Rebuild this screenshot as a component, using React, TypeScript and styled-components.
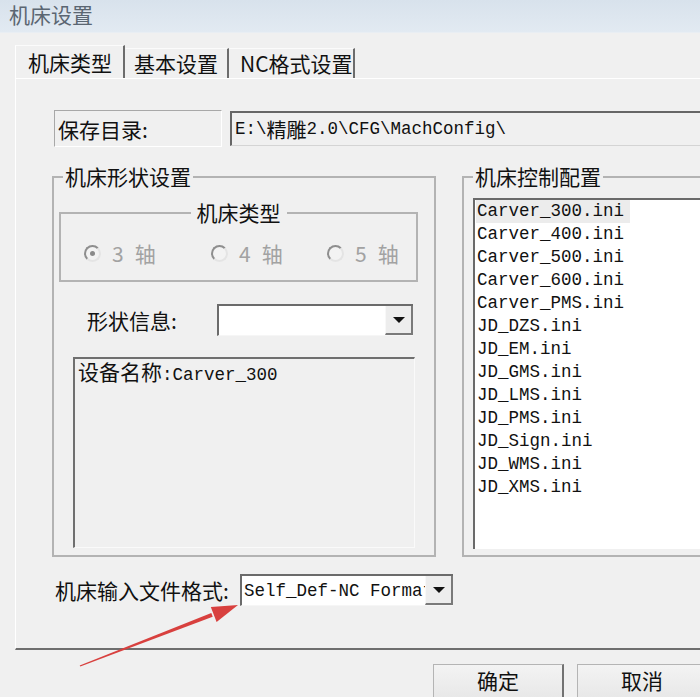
import React from "react";
import styled, { createGlobalStyle } from "styled-components";

const CJK = `"Noto Sans CJK SC", "Noto Sans", sans-serif`;
const MONO = `"Liberation Mono", "Noto Sans CJK SC", monospace`;

const GlobalStyle = createGlobalStyle`
  html, body { margin: 0; padding: 0; background: #f0f0f0; }
  body { font-family: ${CJK}; }
`;

const Viewport = styled.div`
  position: relative;
  width: 700px;
  height: 697px;
  overflow: hidden;
  background: #f0f0f0;
  font-family: ${CJK};
  color: #111;
`;

const Window = styled.div`
  width: 740px;
  display: flex;
  flex-direction: column;
`;

const TitleBar = styled.div`
  height: 32px;
  display: flex;
  align-items: center;
  padding-left: 9px;
  background: linear-gradient(#d8e2ec, #e2eaf2);
  border-bottom: 1px solid #e9eef3;
`;

const Title = styled.span`
  font-size: 21px;
  line-height: 21px;
  color: #5b6672;
  margin-top: -4px;
`;

const TabStrip = styled.div`
  height: 45px;
  display: flex;
  align-items: flex-end;
  padding-left: 15px;
`;

const Tab = styled.div<{ $active?: boolean; $w: number; $pl: number }>`
  box-sizing: border-box;
  width: ${(p) => p.$w}px;
  height: ${(p) => (p.$active ? 33 : 30)}px;
  padding-left: ${(p) => p.$pl}px;
  display: flex;
  align-items: center;
  font-size: 21px;
  line-height: 21px;
  color: #111;
  border-left: 1px solid ${(p) => (p.$active ? "#ffffff" : "transparent")};
  border-top: 1px solid #fbfbfb;
  border-right: 2px solid #6c6c6c;
  white-space: nowrap;
`;

const TabPanel = styled.div`
  margin-left: 15px;
  border-left: 1px solid #ffffff;
  border-top: 1px solid #ffffff;
  border-bottom: 2px solid #6e6e6e;
  padding: 31px 0 42px 0;
  display: flex;
  flex-direction: column;
`;

const PathRow = styled.div`
  display: flex;
  align-items: flex-start;
  gap: 8px;
  padding-left: 38px;
  height: 37px;
`;

const PathLabel = styled.div`
  box-sizing: border-box;
  width: 168px;
  height: 37px;
  padding-left: 3px;
  display: flex;
  align-items: center;
  font-size: 21px;
  border-top: 1px solid #a8a8a8;
  border-left: 1px solid #a8a8a8;
  border-right: 1px solid #ffffff;
  border-bottom: 1px solid #ffffff;
`;

const PathField = styled.div`
  box-sizing: border-box;
  flex: 1;
  height: 35px;
  margin-top: 1px;
  padding-left: 3px;
  display: flex;
  align-items: center;
  font-family: ${MONO};
  font-size: 17.5px;
  color: #111;
  white-space: nowrap;
  border-top: 2px solid #666666;
  border-left: 2px solid #666666;
  border-bottom: 1px solid #d4d4d4;
`;

const Wide = styled.span`
  font-family: ${CJK};
  font-size: 20px;
`;

const Columns = styled.div`
  margin-top: 19px;
  display: flex;
  align-items: stretch;
  gap: 26px;
  padding-left: 36px;
`;

const GroupBox = styled.fieldset<{ $w?: number }>`
  box-sizing: border-box;
  margin: 0;
  padding: 0;
  min-width: 0;
  ${(p) => (p.$w ? `width: ${p.$w}px;` : "flex: 1;")}
  border: 2px solid #b3b3b3;
  display: flex;
  flex-direction: column;
`;

const Legend = styled.legend<{ $center?: boolean; $gap: number }>`
  font-size: 21px;
  line-height: 21px;
  padding: 0 ${(p) => p.$gap}px;
  margin-left: ${(p) => (p.$center ? "auto" : "9px")};
  margin-right: ${(p) => (p.$center ? "auto" : "0")};
  color: #111;
`;

const InnerGroup = styled.fieldset`
  box-sizing: border-box;
  margin: 15px 0 0 5px;
  padding: 0;
  min-width: 0;
  width: 359px;
  border: 2px solid #b3b3b3;
`;

const RadioRow = styled.div`
  display: grid;
  grid-template-columns: 127px 116px auto;
  padding: 20px 0 17px 23px;
`;

const RadioItem = styled.label`
  display: flex;
  align-items: center;
  gap: 11px;
  height: 20px;
  font-size: 21px;
  line-height: 21px;
  color: #a2a2a2;
`;

const RadioDot = styled.span<{ $checked?: boolean }>`
  box-sizing: border-box;
  width: 17px;
  height: 17px;
  border-radius: 50%;
  border: 2px solid;
  border-color: #8e8e8e #e4e4e4 #e4e4e4 #8e8e8e;
  background: #f3f3f3;
  display: flex;
  align-items: center;
  justify-content: center;
  &::after {
    content: "";
    width: 5px;
    height: 5px;
    border-radius: 50%;
    background: ${(p) => (p.$checked ? "#8a8a8a" : "transparent")};
  }
`;

const FieldRow = styled.div<{ $top: number; $pl: number }>`
  margin-top: ${(p) => p.$top}px;
  padding-left: ${(p) => p.$pl}px;
  display: flex;
  align-items: center;
  height: 32px;
`;

const FieldLabel = styled.span<{ $w: number }>`
  width: ${(p) => p.$w}px;
  font-size: 21px;
  line-height: 21px;
  color: #111;
  white-space: nowrap;
`;

const Combo = styled.div<{ $w: number }>`
  box-sizing: border-box;
  width: ${(p) => p.$w}px;
  height: 32px;
  display: flex;
  background: #ffffff;
  border-top: 2px solid #6b6b6b;
  border-left: 2px solid #6b6b6b;
  border-bottom: 1px solid #f6f6f6;
`;

const ComboText = styled.span`
  flex: 1;
  overflow: hidden;
  white-space: nowrap;
  padding-left: 2px;
  display: flex;
  align-items: center;
  font-family: ${MONO};
  font-size: 17.5px;
  color: #111;
`;

const ComboButton = styled.span`
  box-sizing: border-box;
  width: 28px;
  display: flex;
  align-items: center;
  justify-content: center;
  background: #ededed;
  border-left: 1px solid #f8f8f8;
  border-right: 2px solid #7a7a7a;
  border-bottom: 2px solid #7a7a7a;
  &::after {
    content: "";
    width: 0;
    height: 0;
    border-left: 6px solid transparent;
    border-right: 6px solid transparent;
    border-top: 6px solid #111;
  }
`;

const InfoBox = styled.div`
  box-sizing: border-box;
  margin: 21px 0 7px 19px;
  width: 342px;
  height: 191px;
  padding: 1px 0 0 3px;
  background: #f0f0f0;
  border-top: 2px solid #6f6f6f;
  border-left: 2px solid #6f6f6f;
  border-right: 1px solid #fafafa;
  border-bottom: 1px solid #fafafa;
  line-height: 23px;
  white-space: nowrap;
`;

const InfoCjk = styled.span`
  font-size: 21px;
`;

const InfoMono = styled.span`
  font-family: ${MONO};
  font-size: 17.5px;
`;

const ListBox = styled.div`
  box-sizing: border-box;
  flex: 1;
  margin: 11px 0 6px 9px;
  padding: 0 0 0 1px;
  background: #ffffff;
  border-top: 2px solid #6a6a6a;
  border-left: 2px solid #6a6a6a;
  display: flex;
  flex-direction: column;
  align-items: flex-start;
`;

const ListItem = styled.div<{ $selected?: boolean }>`
  font-family: ${MONO};
  font-size: 17.5px;
  line-height: 23px;
  padding: 0 6px 0 1px;
  color: #111;
  white-space: nowrap;
  background: ${(p) => (p.$selected ? "#ececec" : "transparent")};
`;

const ButtonRow = styled.div`
  margin-top: 14px;
  padding-left: 433px;
  display: flex;
  gap: 13px;
`;

const DlgButton = styled.button`
  box-sizing: border-box;
  width: 131px;
  height: 40px;
  padding: 0 0 8px 0;
  margin: 0;
  display: flex;
  align-items: center;
  justify-content: center;
  font-family: ${CJK};
  font-size: 21px;
  line-height: 21px;
  color: #111;
  background: linear-gradient(#f3f3f3, #e6e6e6);
  border: 1px solid #b4b4b4;
  border-right: 2px solid #727272;
`;

const ArrowLayer = styled.svg`
  position: absolute;
  left: 0;
  top: 0;
  pointer-events: none;
`;

const files = [
  "Carver_300.ini",
  "Carver_400.ini",
  "Carver_500.ini",
  "Carver_600.ini",
  "Carver_PMS.ini",
  "JD_DZS.ini",
  "JD_EM.ini",
  "JD_GMS.ini",
  "JD_LMS.ini",
  "JD_PMS.ini",
  "JD_Sign.ini",
  "JD_WMS.ini",
  "JD_XMS.ini",
];

const axes = [
  { n: "3", checked: true },
  { n: "4", checked: false },
  { n: "5", checked: false },
];

export default function App() {
  return (
    <Viewport>
      <GlobalStyle />
      <Window>
        <TitleBar>
          <Title>机床设置</Title>
        </TitleBar>
        <TabStrip>
          <Tab $active $w={110} $pl={12}>机床类型</Tab>
          <Tab $w={104} $pl={8}>基本设置</Tab>
          <Tab $w={126} $pl={10}>NC格式设置</Tab>
        </TabStrip>
        <TabPanel>
          <PathRow>
            <PathLabel>保存目录:</PathLabel>
            <PathField>
              E:\<Wide>精雕</Wide>2.0\CFG\MachConfig\
            </PathField>
          </PathRow>
          <Columns>
            <GroupBox $w={384}>
              <Legend $gap={2}>机床形状设置</Legend>
              <InnerGroup>
                <Legend $center $gap={6}>机床类型</Legend>
                <RadioRow>
                  {axes.map((a) => (
                    <RadioItem key={a.n}>
                      <RadioDot $checked={a.checked} />
                      <span>{a.n}</span>
                      <span>轴</span>
                    </RadioItem>
                  ))}
                </RadioRow>
              </InnerGroup>
              <FieldRow $top={22} $pl={33}>
                <FieldLabel $w={130}>形状信息:</FieldLabel>
                <Combo $w={196}>
                  <ComboText />
                  <ComboButton />
                </Combo>
              </FieldRow>
              <InfoBox>
                <InfoCjk>设备名称</InfoCjk>
                <InfoMono>:Carver_300</InfoMono>
              </InfoBox>
            </GroupBox>
            <GroupBox>
              <Legend $gap={2}>机床控制配置</Legend>
              <ListBox>
                {files.map((f, i) => (
                  <ListItem key={f} $selected={i === 0}>
                    {f}
                  </ListItem>
                ))}
              </ListBox>
            </GroupBox>
          </Columns>
          <FieldRow $top={17} $pl={39}>
            <FieldLabel $w={185}>机床输入文件格式:</FieldLabel>
            <Combo $w={213}>
              <ComboText>Self_Def-NC Format</ComboText>
              <ComboButton />
            </Combo>
          </FieldRow>
        </TabPanel>
        <ButtonRow>
          <DlgButton>确定</DlgButton>
          <DlgButton>取消</DlgButton>
        </ButtonRow>
      </Window>
      <ArrowLayer width="700" height="697" viewBox="0 0 700 697">
        <polygon
          points="79.7,665.4 211.3,612.9 212.7,616.7 80.3,666.6"
          fill="#d8403e"
        />
        <polygon points="238,605 216.6,621.9 210.8,606.9" fill="#d8403e" />
      </ArrowLayer>
    </Viewport>
  );
}
